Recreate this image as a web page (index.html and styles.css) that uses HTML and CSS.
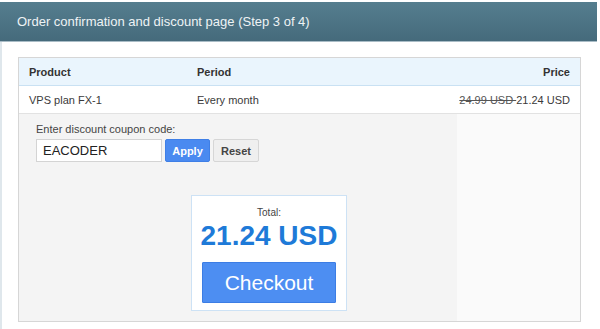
FILE: index.html
```html
<!DOCTYPE html>
<html lang="en">
<head>
    <meta charset="UTF-8">
    <title>Order confirmation</title>
    <link rel="stylesheet" href="styles.css">
</head>
<body>
    <div class="page">
        <div class="title-bar">Order confirmation and discount page (Step 3 of 4)</div>
        <div class="panel">
            <div class="order">
                <div class="row head">
                    <div class="col product">Product</div>
                    <div class="col period">Period</div>
                    <div class="col price">Price</div>
                </div>
                <div class="row">
                    <div class="col product">VPS plan FX-1</div>
                    <div class="col period">Every month</div>
                    <div class="col price"><s>24.99 USD </s>21.24 USD</div>
                </div>
                <div class="discount">
                    <label for="coupon">Enter discount coupon code:</label>
                    <div class="coupon-line">
                        <input type="text" id="coupon" value="EACODER">
                        <button class="btn apply">Apply</button>
                        <button class="btn reset">Reset</button>
                    </div>
                    <div class="total">
                        <p class="total-label">Total:</p>
                        <p class="total-sum">21.24 USD</p>
                        <button class="checkout">Checkout</button>
                    </div>
                </div>
            </div>
        </div>
    </div>
</body>
</html>
```

FILE: styles.css
```css
body {
    margin: 0;
    font-family: "Liberation Sans", Arial, sans-serif;
    background: #fff;
}
.page {
    width: 597px;
    padding-top: 2px;
}
.title-bar {
    height: 40px;
    line-height: 39px;
    padding-left: 17px;
    font-size: 13px;
    color: #eef3f5;
    background: linear-gradient(#557e8f, #456a7b);
    border-bottom: 1px solid #a9bcc6;
    box-sizing: border-box;
}
.panel {
    border-left: 2px solid #dfe7ec;
    padding: 15px 15px 8px 16px;
}
.order {
    border: 1px solid #d6d6d6;
    width: 563px;
    box-sizing: border-box;
}
.row {
    display: flex;
    height: 27px;
    align-items: center;
    font-size: 11px;
    color: #3a3a3a;
    border-bottom: 1px solid #e2e2e2;
    padding: 0 10px;
}
.row.head {
    background: #eaf5fd;
    border-bottom: 1px solid #c9e1f3;
    font-weight: bold;
    color: #333;
}
.product {
    width: 168px;
}
.period {
    flex: 1;
}
.price {
    text-align: right;
}
.price s {
    color: #555;
}
.discount {
    background: linear-gradient(90deg, #f4f4f4 78%, #fafafa 78%);
    padding: 9px 0 11px 17px;
    height: 207px;
    box-sizing: border-box;
}
.discount label {
    display: block;
    font-size: 11px;
    color: #444;
    margin-bottom: 4px;
}
.coupon-line {
    display: flex;
    gap: 3px;
    height: 23px;
}
.coupon-line input {
    width: 126px;
    box-sizing: border-box;
    border: 1px solid #d4d4d4;
    padding: 0 6px;
    font: 13px "Liberation Sans", Arial, sans-serif;
    color: #222;
    background: #fff;
}
.btn {
    font: bold 11px "Liberation Sans", Arial, sans-serif;
    padding: 0;
    width: 45px;
    border-radius: 2px;
}
.apply {
    background: #4a8af0;
    border: 1px solid #3f7fe6;
    color: #fff;
}
.reset {
    width: 46px;
    background: #efefef;
    border: 1px solid #d6d6d6;
    color: #444;
}
.total {
    width: 156px;
    margin: 33px 0 0 155px;
    background: #fff;
    border: 1px solid #cde2f5;
    text-align: center;
    padding: 11px 0 7px;
    box-sizing: border-box;
}
.total-label {
    margin: 0;
    font-size: 10px;
    color: #444;
}
.total-sum {
    margin: 3px 0 11px;
    font-size: 28px;
    font-weight: bold;
    color: #1e7ad8;
    line-height: 30px;
    white-space: nowrap;
}
.checkout {
    width: 134px;
    height: 41px;
    background: #4d8ef2;
    border: 1px solid #3c7de4;
    border-radius: 1px;
    color: #fff;
    font: 21px "Liberation Sans", Arial, sans-serif;
}
```
